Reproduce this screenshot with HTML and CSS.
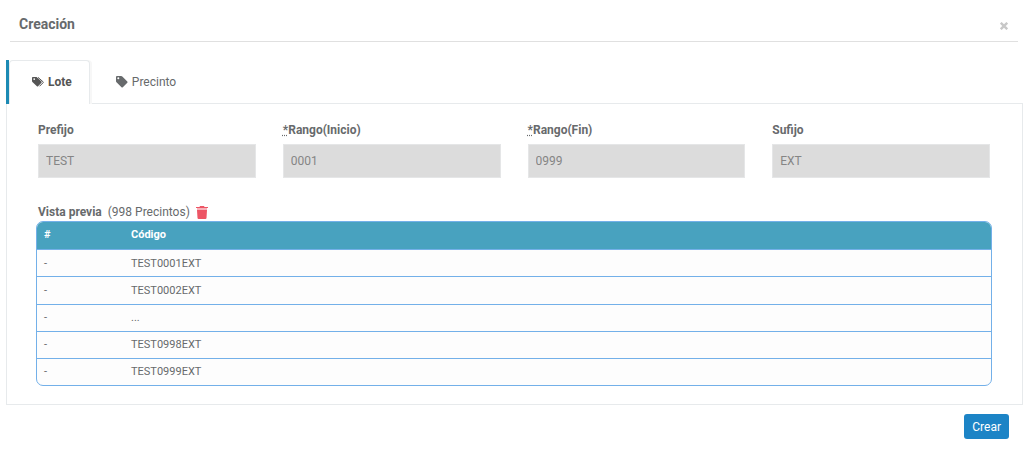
FILE: index.html
```html
<!DOCTYPE html>
<html lang="es">
<head>
<meta charset="utf-8">
<title>Creación</title>
<link rel="stylesheet" href="styles.css">
</head>
<body>
<main class="dialog">
  <header class="dialog-header">
    <h1 class="dialog-title">Creación</h1>
    <button class="close" type="button" aria-label="Cerrar"><svg viewBox="0 0 8 8" width="8" height="8"><path d="M.8.8l6.400 6.400M7.200.8L.8 7.200" stroke="currentColor" stroke-width="2.4"/></svg></button>
  </header>
  <div class="tabs" role="tablist">
    <div class="tab-current" role="presentation">
      <button class="tab tab-active" type="button" role="tab" aria-selected="true">
        <svg viewBox="0 0 12 10" width="12" height="10"><path fill="currentColor" fill-rule="evenodd" d="M.8 0H4.600L9.500 4.600Q10 5.100 9.500 5.700L6 9.300Q5.400 9.800 4.900 9.300L.4 5Q0 4.600 0 4V.8Q0 0 .8 0ZM2.200 1.200A.9.900 0 1 0 2.200 3A.9.900 0 1 0 2.200 1.200Z"/><path d="M6 .4L11.100 4.800Q11.500 5.200 11.100 5.700L7.500 9.300" fill="none" stroke="currentColor"/></svg>
        <span>Lote</span>
      </button>
    </div>
    <button class="tab" type="button" role="tab" aria-selected="false">
      <svg viewBox="0 0 12 12" width="12" height="12"><path fill="currentColor" fill-rule="evenodd" d="M1 0H5.200Q5.800 0 6.300.5L11.300 5.400Q11.900 6 11.300 6.700L6.800 11.300Q6.100 11.900 5.500 11.300L.5 6.200Q0 5.700 0 5.200V1Q0 0 1 0ZM2.300 1.300A1 1 0 1 0 2.300 3.300A1 1 0 1 0 2.300 1.300Z"/></svg>
      <span>Precinto</span>
    </button>
  </div>
  <section class="panel">
    <form class="fields">
      <div class="field"><label for="prefijo">Prefijo</label><input id="prefijo" type="text" value="TEST" disabled></div>
      <div class="field"><label for="inicio"><abbr title="Obligatorio">*</abbr>Rango(Inicio)</label><input id="inicio" type="text" value="0001" disabled></div>
      <div class="field"><label for="fin"><abbr title="Obligatorio">*</abbr>Rango(Fin)</label><input id="fin" type="text" value="0999" disabled></div>
      <div class="field"><label for="sufijo">Sufijo</label><input id="sufijo" type="text" value="EXT" disabled></div>
    </form>
    <div class="preview-heading">
      <h2 class="preview-title">Vista previa</h2>
      <span>(998 Precintos)</span>
      <button class="trash" type="button" aria-label="Eliminar"><svg viewBox="0 0 12 13" width="12" height="13"><path fill="currentColor" d="M0 1H3.500L4 0H8L8.500 1H12V2H0Z"/><path fill="currentColor" opacity=".45" d="M1 2H11V4H1Z"/><path fill="currentColor" d="M1 4H11L10.500 12Q10.400 13 9.500 13H2.500Q1.600 13 1.500 12Z"/></svg></button>
    </div>
    <table class="preview">
      <thead><tr><th class="col-number">#</th><th>Código</th></tr></thead>
      <tbody>
        <tr><td>-</td><td>TEST0001EXT</td></tr>
        <tr><td>-</td><td>TEST0002EXT</td></tr>
        <tr><td>-</td><td>...</td></tr>
        <tr><td>-</td><td>TEST0998EXT</td></tr>
        <tr><td>-</td><td>TEST0999EXT</td></tr>
      </tbody>
    </table>
  </section>
  <footer class="dialog-footer"><button class="create" type="button">Crear</button></footer>
</main>
</body>
</html>
```
FILE: styles.css
```css
* { box-sizing: border-box; }
body {
  margin: 0;
  background: #fff;
  color: #676a6c;
  font: 12px/16px Roboto, sans-serif;
}
button { font: inherit; color: inherit; border: 0; margin: 0; padding: 0; background: none; cursor: pointer; }
svg { display: block; }
.dialog { padding: 6px 10px 0 6px; }
.dialog-header {
  display: flex;
  align-items: center;
  justify-content: space-between;
  height: 36px;
  margin: 0 5px 0 4px;
  padding: 0 10px 0 9px;
  border-bottom: 1px solid #e0e0e0;
}
.dialog-title { margin: 0; font-size: 14px; line-height: 20px; font-weight: 700; }
.close { color: #c8c8c8; padding-top: 4px; }
.tabs { display: flex; margin-top: 18px; }
.tab {
  display: flex;
  align-items: center;
  gap: 4px;
  height: 44px;
  padding: 0 26px;
}
.tab-current { border-left: 3px solid #1c8ab4; margin-bottom: -1px; position: relative; }
.tab-active {
  padding: 0 17px 1px 22px;
  color: #555;
  font-weight: 700;
  background: #fff;
  border: 1px solid #e7eaec;
  border-bottom: 0;
  border-radius: 4px 4px 0 0;
  box-shadow: 2px 0 #f7f7f7;
}
.tabs > .tab { margin-bottom: -1px; }
.panel { padding: 18px 30px 18px 29px; border: 1px solid #e7eaec; }
.fields { display: grid; grid-template-columns: repeat(4, 1fr); gap: 27px; padding: 0 2px; }
.field { display: flex; flex-direction: column; gap: 6px; min-width: 0; }
.field label { font-weight: 700; }
abbr { text-decoration: underline dotted; }
.field input {
  width: 100%;
  height: 34px;
  padding: 0 7px;
  font: 12px/16px Roboto, sans-serif;
  color: #858585;
  background: #dcdcdc;
  border: 1px solid #e5e6e7;
  border-radius: 0;
}
.preview-heading { display: flex; align-items: center; gap: 6px; margin-top: 25px; padding-left: 2px; height: 18px; }
.preview-title { margin: 0; font-size: 12px; line-height: 18px; font-weight: 700; }
.trash { color: #ed5565; }
.preview {
  width: 100%;
  table-layout: fixed;
  border-collapse: separate;
  border-spacing: 0;
  border: 1px solid #73b0e9;
  border-radius: 7px;
  overflow: hidden;
  background: #fdfdfd;
  font-size: 11px;
}
.preview th, .preview td { height: 27px; padding: 1px 7px 0; text-align: left; line-height: 16px; }
.preview th { padding: 0 7px 2px; color: #fff; background: #48a2bf; }
.preview td { border-top: 1px solid #73b0e9; }
.preview tr:nth-child(2) td { height: 28px; padding-bottom: 1px; }
.preview tr:nth-child(n+3) td { padding: 0 7px 1px; }
.col-number { width: 87px; }
.dialog-footer { display: flex; justify-content: flex-end; padding: 9px 14px 0 0; }
.create { height: 25px; padding: 0 8px; font-size: 12px; color: #fff; background: #1c84c6; border-radius: 3px; }
```
